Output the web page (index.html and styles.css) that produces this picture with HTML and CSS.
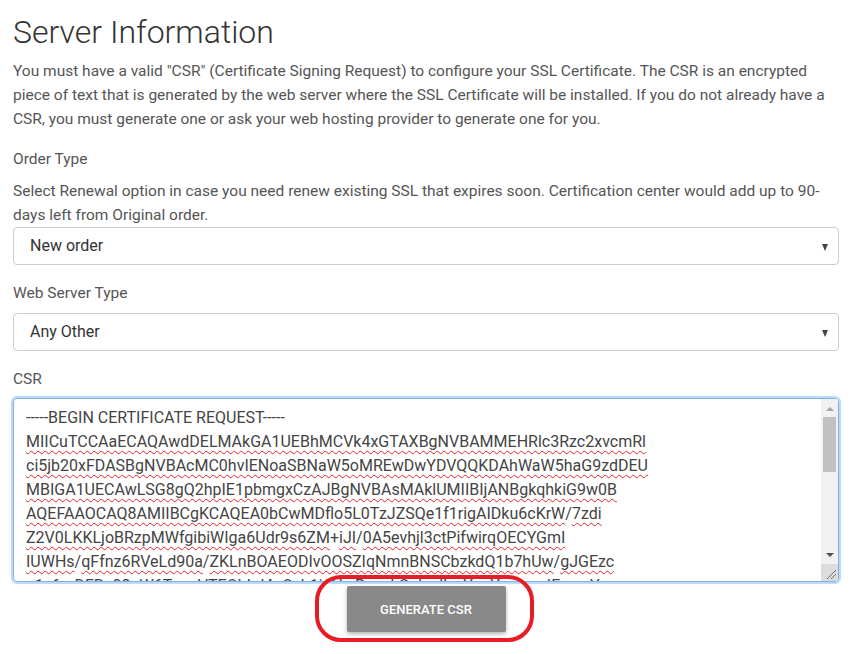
FILE: index.html
```html
<!DOCTYPE html>
<html lang="en">
<head>
<meta charset="utf-8">
<title>Server Information</title>
<link rel="stylesheet" href="styles.css">
</head>
<body>
<main class="page">
  <h1 class="title">Server Information</h1>
  <p class="intro">You must have a valid "CSR" (Certificate Signing Request) to configure your SSL Certificate. The CSR is an encrypted piece of text that is generated by the web server where the SSL Certificate will be installed. If you do not already have a CSR, you must generate one or ask your web hosting provider to generate one for you.</p>

  <div class="field">
    <div class="label">Order Type</div>
    <p class="help">Select Renewal option in case you need renew existing SSL that expires soon. Certification center would add up to 90-days left from Original order.</p>
    <div class="select"><span class="select-value">New order</span><span class="caret"></span></div>
  </div>

  <div class="field">
    <div class="label">Web Server Type</div>
    <div class="select gap"><span class="select-value">Any Other</span><span class="caret"></span></div>
  </div>

  <div class="field">
    <div class="label">CSR</div>
    <div class="textarea">
      <div class="ta-content">-----BEGIN CERTIFICATE REQUEST-----
<span class="sp">MIICuTCCAaECAQAwdDELMAkGA1UEBhMCVk4xGTAXBgNVBAMMEHRlc3Rzc2xvcmRl</span>
<span class="sp">ci5jb20xFDASBgNVBAcMC0hvIENoaSBNaW5oMREwDwYDVQQKDAhWaW5haG9zdDEU</span>
<span class="sp">MBIGA1UECAwLSG8gQ2hpIE1pbmgxCzAJBgNVBAsMAklUMIIBIjANBgkqhkiG9w0B</span>
<span class="sp">AQEFAAOCAQ8AMIIBCgKCAQEA0bCwMDflo5L0TzJZSQe1f1rigAIDku6cKrW</span>/<span class="sp">7zdi</span>
<span class="sp">Z2V0LKKLjoBRzpMWfgibiWIga6Udr9s6ZM</span>+<span class="sp">iJI</span>/<span class="sp">0A5evhjl3ctPifwirqOECYGmI</span>
<span class="sp">IUWHs</span>/<span class="sp">qFfnz6RVeLd90a</span>/<span class="sp">ZKLnBOAEODIvOOSZIqNmnBNSCbzkdQ1b7hUw</span>/<span class="sp">gJGEzc</span>
<span class="sp">a1v6mDFRn08pW6Ta</span>+<span class="sp">aVTEQbLd4nOyb1j6HwBunvLGnkzdIsyYoaYoxzmaIEysmY</span></div>
      <div class="scrollbar">
        <span class="sb-up"></span>
        <span class="sb-thumb"></span>
        <span class="sb-track"></span>
        <span class="sb-down"></span>
        <span class="sb-corner">
          <svg width="17" height="17" viewBox="0 0 17 17"><path d="M6 15 L15 6 M10 15 L15 10" stroke="#6f6f6f" stroke-width="1" fill="none"/></svg>
        </span>
      </div>
    </div>
  </div>

  <div class="actions">
    <div class="btn-wrap">
      <button class="btn" type="button">Generate CSR</button>
      <span class="ring"></span>
    </div>
  </div>
</main>
</body>
</html>
```

FILE: styles.css
```css
* { box-sizing: border-box; }
html, body { margin: 0; padding: 0; background: #fff; }
body {
  font-family: Roboto, "Liberation Sans", Arial, sans-serif;
  color: #555;
  font-size: 15.5px;
  line-height: 24px;
}
.page {
  width: 856px;
  padding: 14px 17px 22px 13px;
}
.title {
  margin: 0 0 9px 0;
  font-size: 32px;
  line-height: 36px;
  font-weight: 300;
  color: #333;
}
.intro { margin: 0; }
.field { margin-top: 16px; }
.label { display: block; }
.help { margin: 8px 0 0 0; }
.select {
  display: flex;
  align-items: center;
  justify-content: space-between;
  height: 38px;
  border: 1px solid #ccc;
  border-radius: 4px;
  padding: 0 10px 0 16px;
  color: #333;
  font-size: 16px;
}
.select.gap { margin-top: 8px; }
.caret {
  width: 0; height: 0;
  border-left: 3.5px solid transparent;
  border-right: 3.5px solid transparent;
  border-top: 7px solid #444;
  margin-top: 2px;
}
.textarea {
  margin-top: 7px;
  height: 184px;
  display: flex;
  border: 1px solid #7fb5ee;
  border-radius: 4px;
  box-shadow: 0 0 1px 2px #b9d8f8;
  overflow: hidden;
}
.ta-content {
  flex: 1;
  overflow: hidden;
  padding: 7px 12px 0 12px;
  white-space: pre;
  color: #444;
  font-size: 16px;
  line-height: 24px;
}
.sp {
  text-decoration: underline wavy #e0242a;
  text-decoration-thickness: 1px;
  text-underline-offset: 3px;
  text-decoration-skip-ink: none;
}
.scrollbar {
  width: 17px;
  flex: none;
  display: flex;
  flex-direction: column;
  align-items: center;
  background: #f1f1f1;
}
.sb-up {
  margin-top: 8px;
  width: 0; height: 0;
  border-left: 4px solid transparent;
  border-right: 4px solid transparent;
  border-bottom: 4px solid #a3a3a3;
}
.sb-thumb {
  margin-top: 6px;
  width: 13px;
  height: 55px;
  background: #c1c1c1;
}
.sb-track { flex: 1; }
.sb-down {
  margin-bottom: 7px;
  width: 0; height: 0;
  border-left: 4px solid transparent;
  border-right: 4px solid transparent;
  border-top: 4px solid #505050;
}
.sb-corner {
  width: 17px;
  height: 17px;
  background: #dcdcdc;
  display: block;
}
.sb-corner svg { display: block; }
.actions {
  display: flex;
  justify-content: center;
  margin-top: 4px;
}
.btn-wrap { position: relative; }
.btn {
  display: block;
  width: 159px;
  height: 46px;
  border: 0;
  border-radius: 2px;
  background: #898989;
  color: #fff;
  font-family: Roboto, "Liberation Sans", Arial, sans-serif;
  font-size: 13px;
  font-weight: 500;
  text-transform: uppercase;
  box-shadow: 0 2px 4px rgba(0,0,0,0.3);
}
.ring {
  position: absolute;
  left: -32px;
  right: -28px;
  top: -11px;
  bottom: -10px;
  border: 4px solid #e81c25;
  border-radius: 26px;
  pointer-events: none;
}
```
